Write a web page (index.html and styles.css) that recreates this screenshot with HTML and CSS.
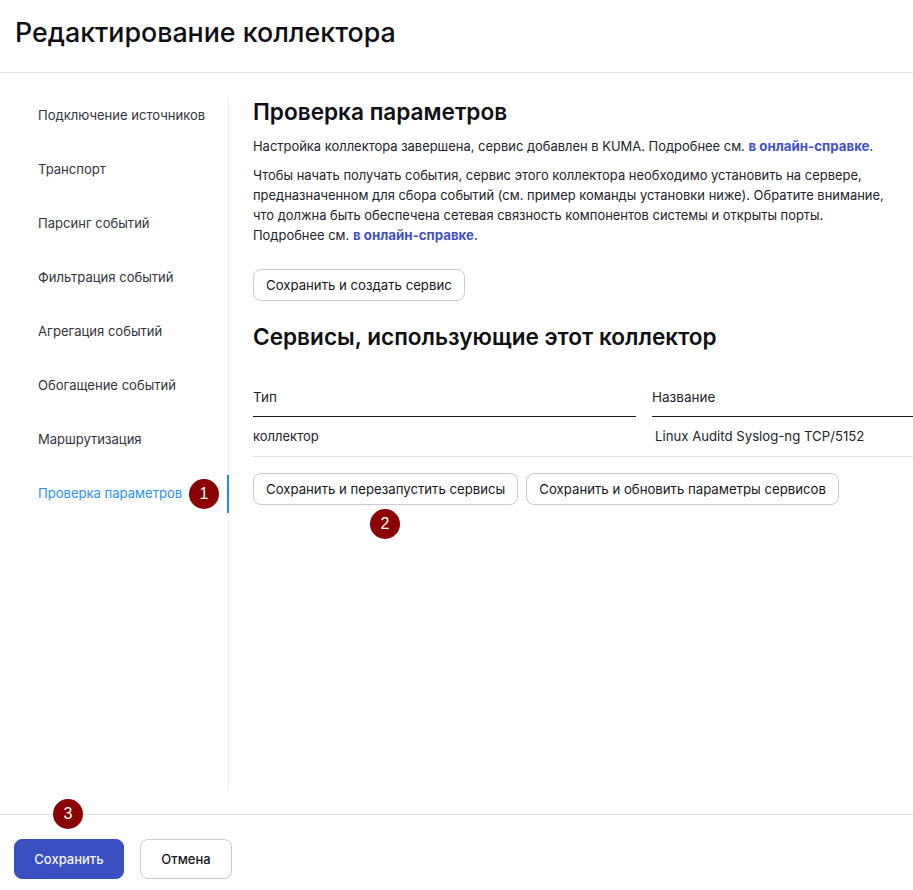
FILE: index.html
```html
<!DOCTYPE html>
<html lang="ru">
<head>
<meta charset="utf-8">
<title>Редактирование коллектора</title>
<link rel="stylesheet" href="styles.css">
</head>
<body>
<div class="page">
  <header class="header"><h1>Редактирование коллектора</h1></header>
  <main class="main">
    <nav class="nav">
      <a class="nav-item">Подключение источников</a>
      <a class="nav-item">Транспорт</a>
      <a class="nav-item">Парсинг событий</a>
      <a class="nav-item">Фильтрация событий</a>
      <a class="nav-item">Агрегация событий</a>
      <a class="nav-item">Обогащение событий</a>
      <a class="nav-item">Маршрутизация</a>
      <a class="nav-item active">Проверка параметров</a>
    </nav>
    <section class="content">
      <h2 class="title-first">Проверка параметров</h2>
      <p class="p-first">Настройка коллектора завершена, сервис добавлен в KUMA. Подробнее см. <a class="link">в онлайн-справке</a>.</p>
      <p class="p-second">Чтобы начать получать события, сервис этого коллектора необходимо установить на сервере, предназначенном для сбора событий (см. пример команды установки ниже). Обратите внимание, что должна быть обеспечена сетевая связность компонентов системы и открыты порты. Подробнее см. <a class="link">в онлайн-справке</a>.</p>
      <button class="btn btn-create">Сохранить и создать сервис</button>
      <h2 class="title-second">Сервисы, использующие этот коллектор</h2>
      <div class="table">
        <div class="th th-type">Тип</div>
        <div class="th th-name">Название</div>
        <div class="td td-type">коллектор</div>
        <div class="td td-name">Linux Auditd Syslog-ng TCP/5152</div>
      </div>
      <div class="actions">
        <button class="btn">Сохранить и перезапустить сервисы</button>
        <button class="btn">Сохранить и обновить параметры сервисов</button>
      </div>
    </section>
  </main>
  <footer class="footer">
    <button class="btn-primary">Сохранить</button>
    <button class="btn-cancel">Отмена</button>
  </footer>
  <span class="badge badge-1">1</span>
  <span class="badge badge-2">2</span>
  <span class="badge badge-3">3</span>
</div>
</body>
</html>
```
FILE: styles.css
```css
* { box-sizing: border-box; }
html, body { margin: 0; padding: 0; background: #fff; }
body { font-family: Inter, "Noto Sans", sans-serif; color: #1d1d22; overflow: hidden; }
.page { position: relative; width: 913px; height: 890px; display: flex; flex-direction: column; overflow: hidden; }
.header { height: 73px; border-bottom: 1px solid #dfe1e7; padding: 15px 15px 0; flex: none; }
h1 { margin: 0; font-size: 26.8px; line-height: 34px; font-weight: 500; color: #0f0f14; }
.main { flex: none; height: 741px; display: flex; padding-top: 24px; }
.nav { width: 229px; height: 694px; border-right: 1px solid #eceef2; flex: none; display: flex; flex-direction: column; gap: 16px; }
.nav-item { height: 38px; line-height: 36px; padding-left: 38px; font-size: 13.05px; color: #33353c; white-space: nowrap; }
.nav-item.active { color: #2a93f5; border-right: 2px solid #1e8df0; margin-right: -1px; }
.content { margin-left: 24px; width: 660px; flex: none; }
h2 { margin: 0; font-size: 22.6px; line-height: 30px; font-weight: 600; color: #0f0f14; white-space: nowrap; }
p { margin: 0; font-size: 12.95px; line-height: 20px; color: #23242a; max-width: 636px; }
.p-first { margin-top: 9px; }
.p-second { margin-top: 9px; }
.link { font-weight: 700; font-size: 13.3px; color: #4152c4; }
.btn { height: 32px; padding: 0 12px; background: #fff; border: 1px solid #c7cad3; border-radius: 8px; font: 13.2px/30px Inter, sans-serif; color: #15161b; white-space: nowrap; }
.btn-create { display: block; margin-top: 24px; }
.title-second { margin-top: 21px; }
.table { display: grid; grid-template-columns: 383px 261px; column-gap: 16px; margin-top: 26px; }
.th { height: 39px; line-height: 38px; font-size: 13.5px; border-bottom: 1px solid #17171c; color: #23242a; }
.td { height: 40px; line-height: 39px; font-size: 13px; border-bottom: 1px solid #dfe1e7; color: #23242a; }
.td-type { margin-right: -16px; }
.td-name { padding-left: 3px; font-size: 13.2px; }
.actions { display: flex; gap: 8px; margin-top: 16px; }
.footer { flex: 1; border-top: 1px solid #dfe1e7; padding: 24px 14px 0; display: flex; gap: 16px; align-items: flex-start; }
.btn-primary, .btn-cancel { height: 40px; border-radius: 8px; font: 500 13px/38px Inter, sans-serif; padding: 0; }
.btn-primary { width: 110px; background: #3a4fc0; border: 1px solid #3a4fc0; color: #f4f5ff; }
.btn-cancel { width: 92px; background: #fff; border: 1px solid #c7cad3; color: #15161b; }
.badge { position: absolute; width: 30px; height: 30px; border-radius: 50%; background: #8b0000; color: #fff; font: 16px/30px "Liberation Sans", Arial, sans-serif; text-align: center; }
.badge-1 { left: 189px; top: 479px; }
.badge-2 { left: 370px; top: 509px; }
.badge-3 { left: 53px; top: 799px; }
```
